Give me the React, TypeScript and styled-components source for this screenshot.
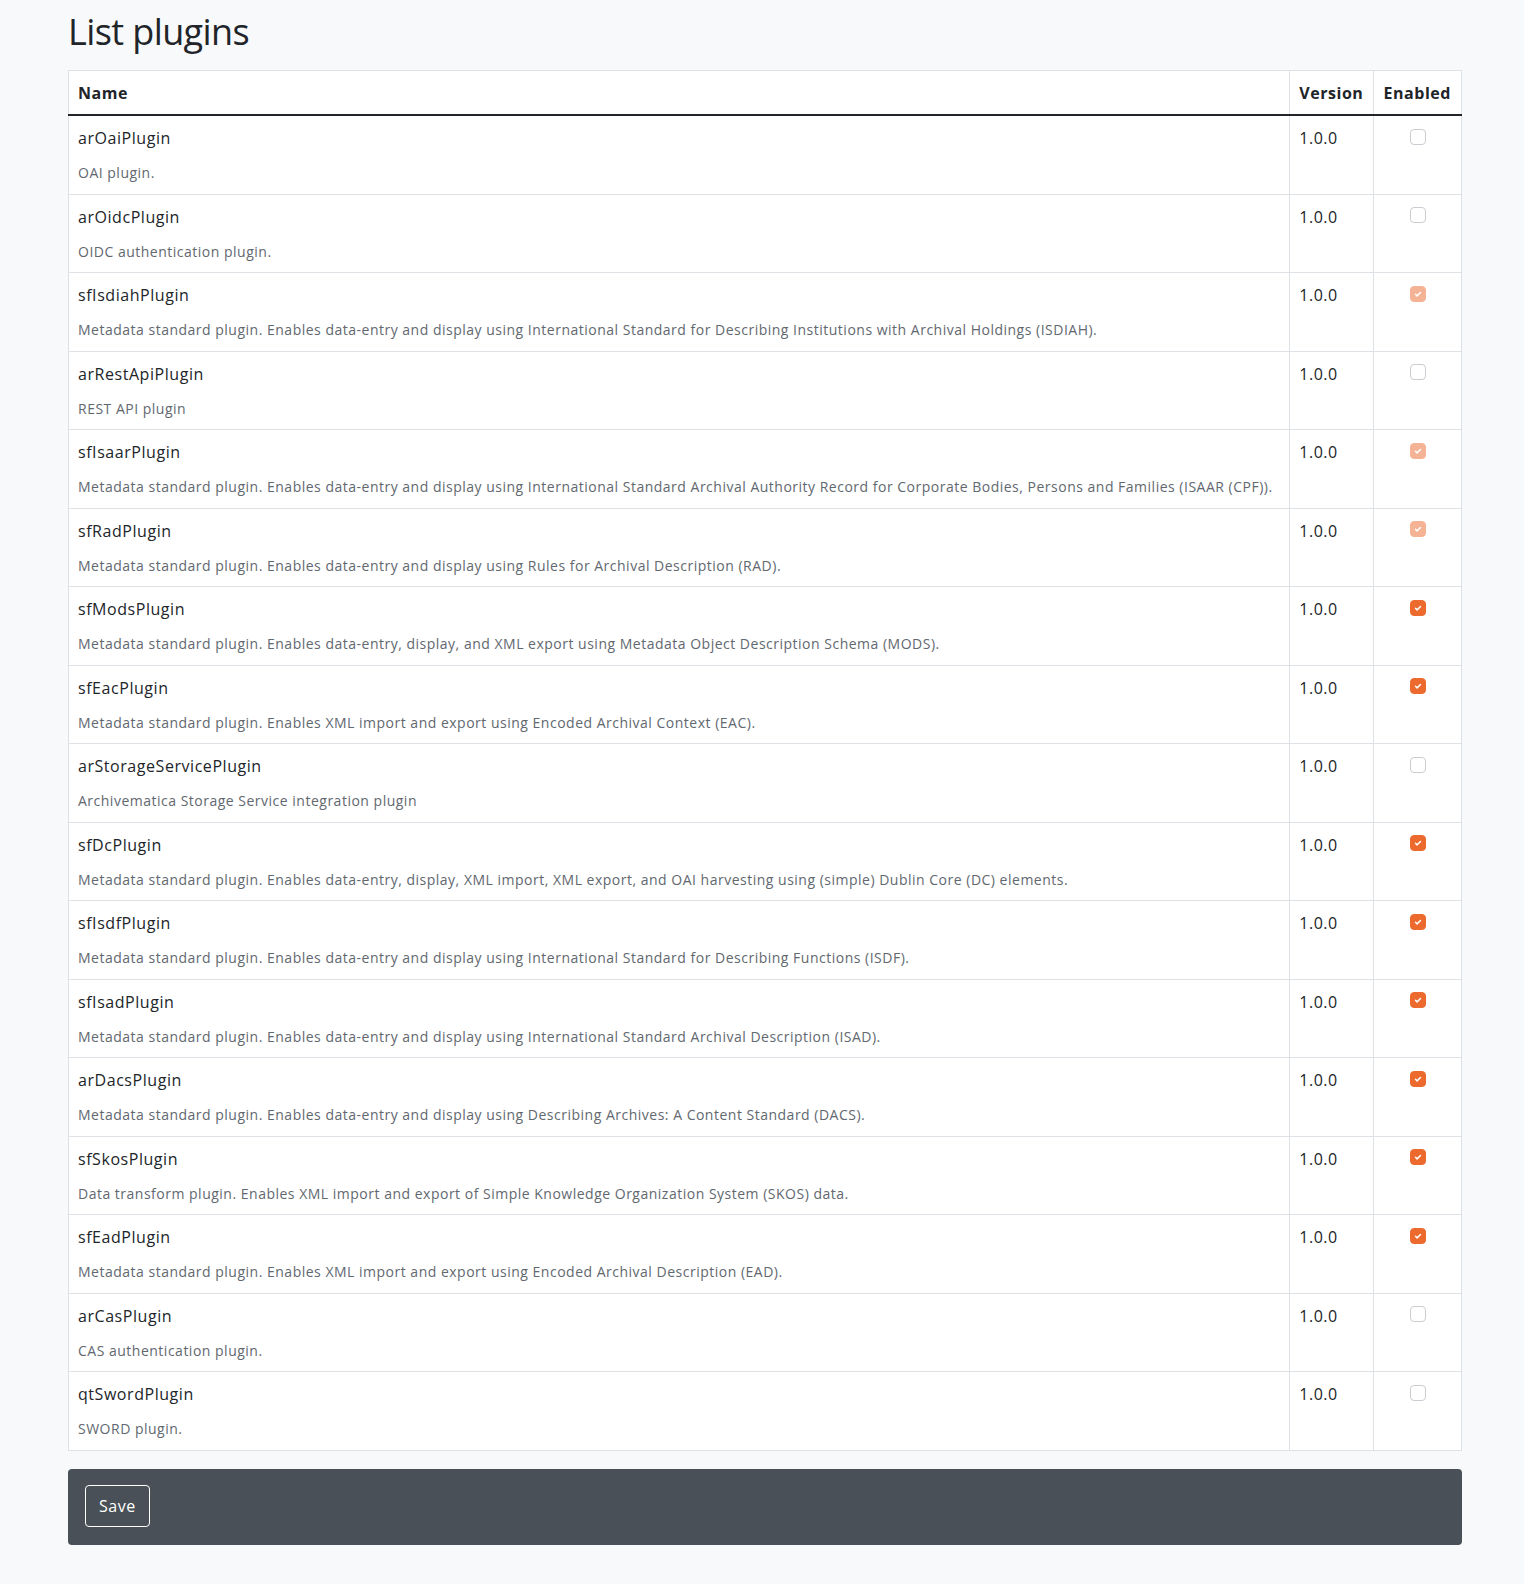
import styled, { createGlobalStyle } from 'styled-components';

const GlobalStyle = createGlobalStyle`
	html, body {
		margin: 0;
		padding: 0;
		background: #f8f9fa;
		color: #212529;
		font-family: 'Open Sans', 'Noto Sans', sans-serif;
		font-size: 16px;
		line-height: 1.5;
	}
`;

const Page = styled.main`
	width: 1394px;
	padding: 10px 0 40px 68px;
`;

const Title = styled.h1`
	margin: 0 0 17px;
	font-size: 36px;
	font-weight: 400;
	line-height: 1.2;
	letter-spacing: -0.6px;
	color: #212529;
`;

const Table = styled.table`
	width: 100%;
	border-collapse: collapse;
	background: #fff;
	border: 1px solid #dee2e6;
`;

const HeadCell = styled.th<{ $narrow?: boolean }>`
	text-align: left;
	font-weight: 700;
	letter-spacing: 0.55px;
	padding: 10px 10px 9px 9px;
	border-left: 1px solid #dee2e6;
	border-bottom: 2px solid #212529;
	white-space: nowrap;
	width: ${(p) => (p.$narrow ? '1%' : 'auto')};
	&:first-child {
		border-left: none;
	}
`;

const Cell = styled.td<{ $center?: boolean }>`
	vertical-align: top;
	padding: 10px 9px 10.5px;
	border-left: 1px solid #dee2e6;
	border-bottom: 1px solid #dee2e6;
	letter-spacing: 0.55px;
	text-align: ${(p) => (p.$center ? 'center' : 'left')};
	&:first-child {
		border-left: none;
	}
`;

const PluginName = styled.div`
	font-size: 16px;
	line-height: 24px;
`;

const Description = styled.div`
	margin-top: 12px;
	font-size: 14px;
	line-height: 21px;
	letter-spacing: 0.5px;
	color: #62686f;
`;

const Box = styled.span<{ $checked: boolean; $disabled: boolean }>`
	display: flex;
	align-items: center;
	justify-content: center;
	box-sizing: border-box;
	width: 16px;
	height: 16px;
	margin: 2.5px auto 0;
	border-radius: 4px;
	border: 1px solid ${(p) => (p.$checked ? '#ec6a2d' : '#c9cdd1')};
	background: ${(p) => (p.$checked ? '#ec6a2d' : '#fff')};
	opacity: ${(p) => (p.$disabled ? 0.5 : 1)};
`;

const Footer = styled.section`
	margin-top: 18px;
	padding: 16px 17px 18px;
	background: #495057;
	border-radius: 4px;
`;

const SaveButton = styled.button`
	font-family: inherit;
	font-size: 16px;
	line-height: 24px;
	letter-spacing: 0.5px;
	padding: 8px 13px;
	color: #fff;
	background: transparent;
	border: 1px solid #fff;
	border-radius: 4px;
	cursor: pointer;
`;

type Plugin = { name: string; desc: string; checked: boolean; locked?: boolean };

const plugins: Plugin[] = [
	{ name: 'arOaiPlugin', desc: 'OAI plugin.', checked: false },
	{ name: 'arOidcPlugin', desc: 'OIDC authentication plugin.', checked: false },
	{
		name: 'sfIsdiahPlugin',
		desc: 'Metadata standard plugin. Enables data-entry and display using International Standard for Describing Institutions with Archival Holdings (ISDIAH).',
		checked: true,
		locked: true,
	},
	{ name: 'arRestApiPlugin', desc: 'REST API plugin', checked: false },
	{
		name: 'sfIsaarPlugin',
		desc: 'Metadata standard plugin. Enables data-entry and display using International Standard Archival Authority Record for Corporate Bodies, Persons and Families (ISAAR (CPF)).',
		checked: true,
		locked: true,
	},
	{
		name: 'sfRadPlugin',
		desc: 'Metadata standard plugin. Enables data-entry and display using Rules for Archival Description (RAD).',
		checked: true,
		locked: true,
	},
	{
		name: 'sfModsPlugin',
		desc: 'Metadata standard plugin. Enables data-entry, display, and XML export using Metadata Object Description Schema (MODS).',
		checked: true,
	},
	{
		name: 'sfEacPlugin',
		desc: 'Metadata standard plugin. Enables XML import and export using Encoded Archival Context (EAC).',
		checked: true,
	},
	{ name: 'arStorageServicePlugin', desc: 'Archivematica Storage Service integration plugin', checked: false },
	{
		name: 'sfDcPlugin',
		desc: 'Metadata standard plugin. Enables data-entry, display, XML import, XML export, and OAI harvesting using (simple) Dublin Core (DC) elements.',
		checked: true,
	},
	{
		name: 'sfIsdfPlugin',
		desc: 'Metadata standard plugin. Enables data-entry and display using International Standard for Describing Functions (ISDF).',
		checked: true,
	},
	{
		name: 'sfIsadPlugin',
		desc: 'Metadata standard plugin. Enables data-entry and display using International Standard Archival Description (ISAD).',
		checked: true,
	},
	{
		name: 'arDacsPlugin',
		desc: 'Metadata standard plugin. Enables data-entry and display using Describing Archives: A Content Standard (DACS).',
		checked: true,
	},
	{
		name: 'sfSkosPlugin',
		desc: 'Data transform plugin. Enables XML import and export of Simple Knowledge Organization System (SKOS) data.',
		checked: true,
	},
	{
		name: 'sfEadPlugin',
		desc: 'Metadata standard plugin. Enables XML import and export using Encoded Archival Description (EAD).',
		checked: true,
	},
	{ name: 'arCasPlugin', desc: 'CAS authentication plugin.', checked: false },
	{ name: 'qtSwordPlugin', desc: 'SWORD plugin.', checked: false },
];

const Checkbox = ({ checked, disabled }: { checked: boolean; disabled: boolean }) => (
	<Box $checked={checked} $disabled={disabled}>
		{checked && (
			<svg width='10' height='10' viewBox='0 0 20 20'>
				<path
					d='M5 10.5l3.2 3.2L15 7'
					fill='none'
					stroke='#fff'
					strokeWidth='3'
					strokeLinecap='round'
					strokeLinejoin='round'
				/>
			</svg>
		)}
	</Box>
);

const App = () => (
	<>
		<GlobalStyle />
		<Page>
			<Title>List plugins</Title>
			<Table>
				<thead>
					<tr>
						<HeadCell>Name</HeadCell>
						<HeadCell $narrow>Version</HeadCell>
						<HeadCell $narrow>Enabled</HeadCell>
					</tr>
				</thead>
				<tbody>
					{plugins.map((p) => (
						<tr key={p.name}>
							<Cell>
								<PluginName>{p.name}</PluginName>
								<Description>{p.desc}</Description>
							</Cell>
							<Cell>1.0.0</Cell>
							<Cell $center>
								<Checkbox checked={p.checked} disabled={!!p.locked} />
							</Cell>
						</tr>
					))}
				</tbody>
			</Table>
			<Footer>
				<SaveButton type='button'>Save</SaveButton>
			</Footer>
		</Page>
	</>
);

export default App;
